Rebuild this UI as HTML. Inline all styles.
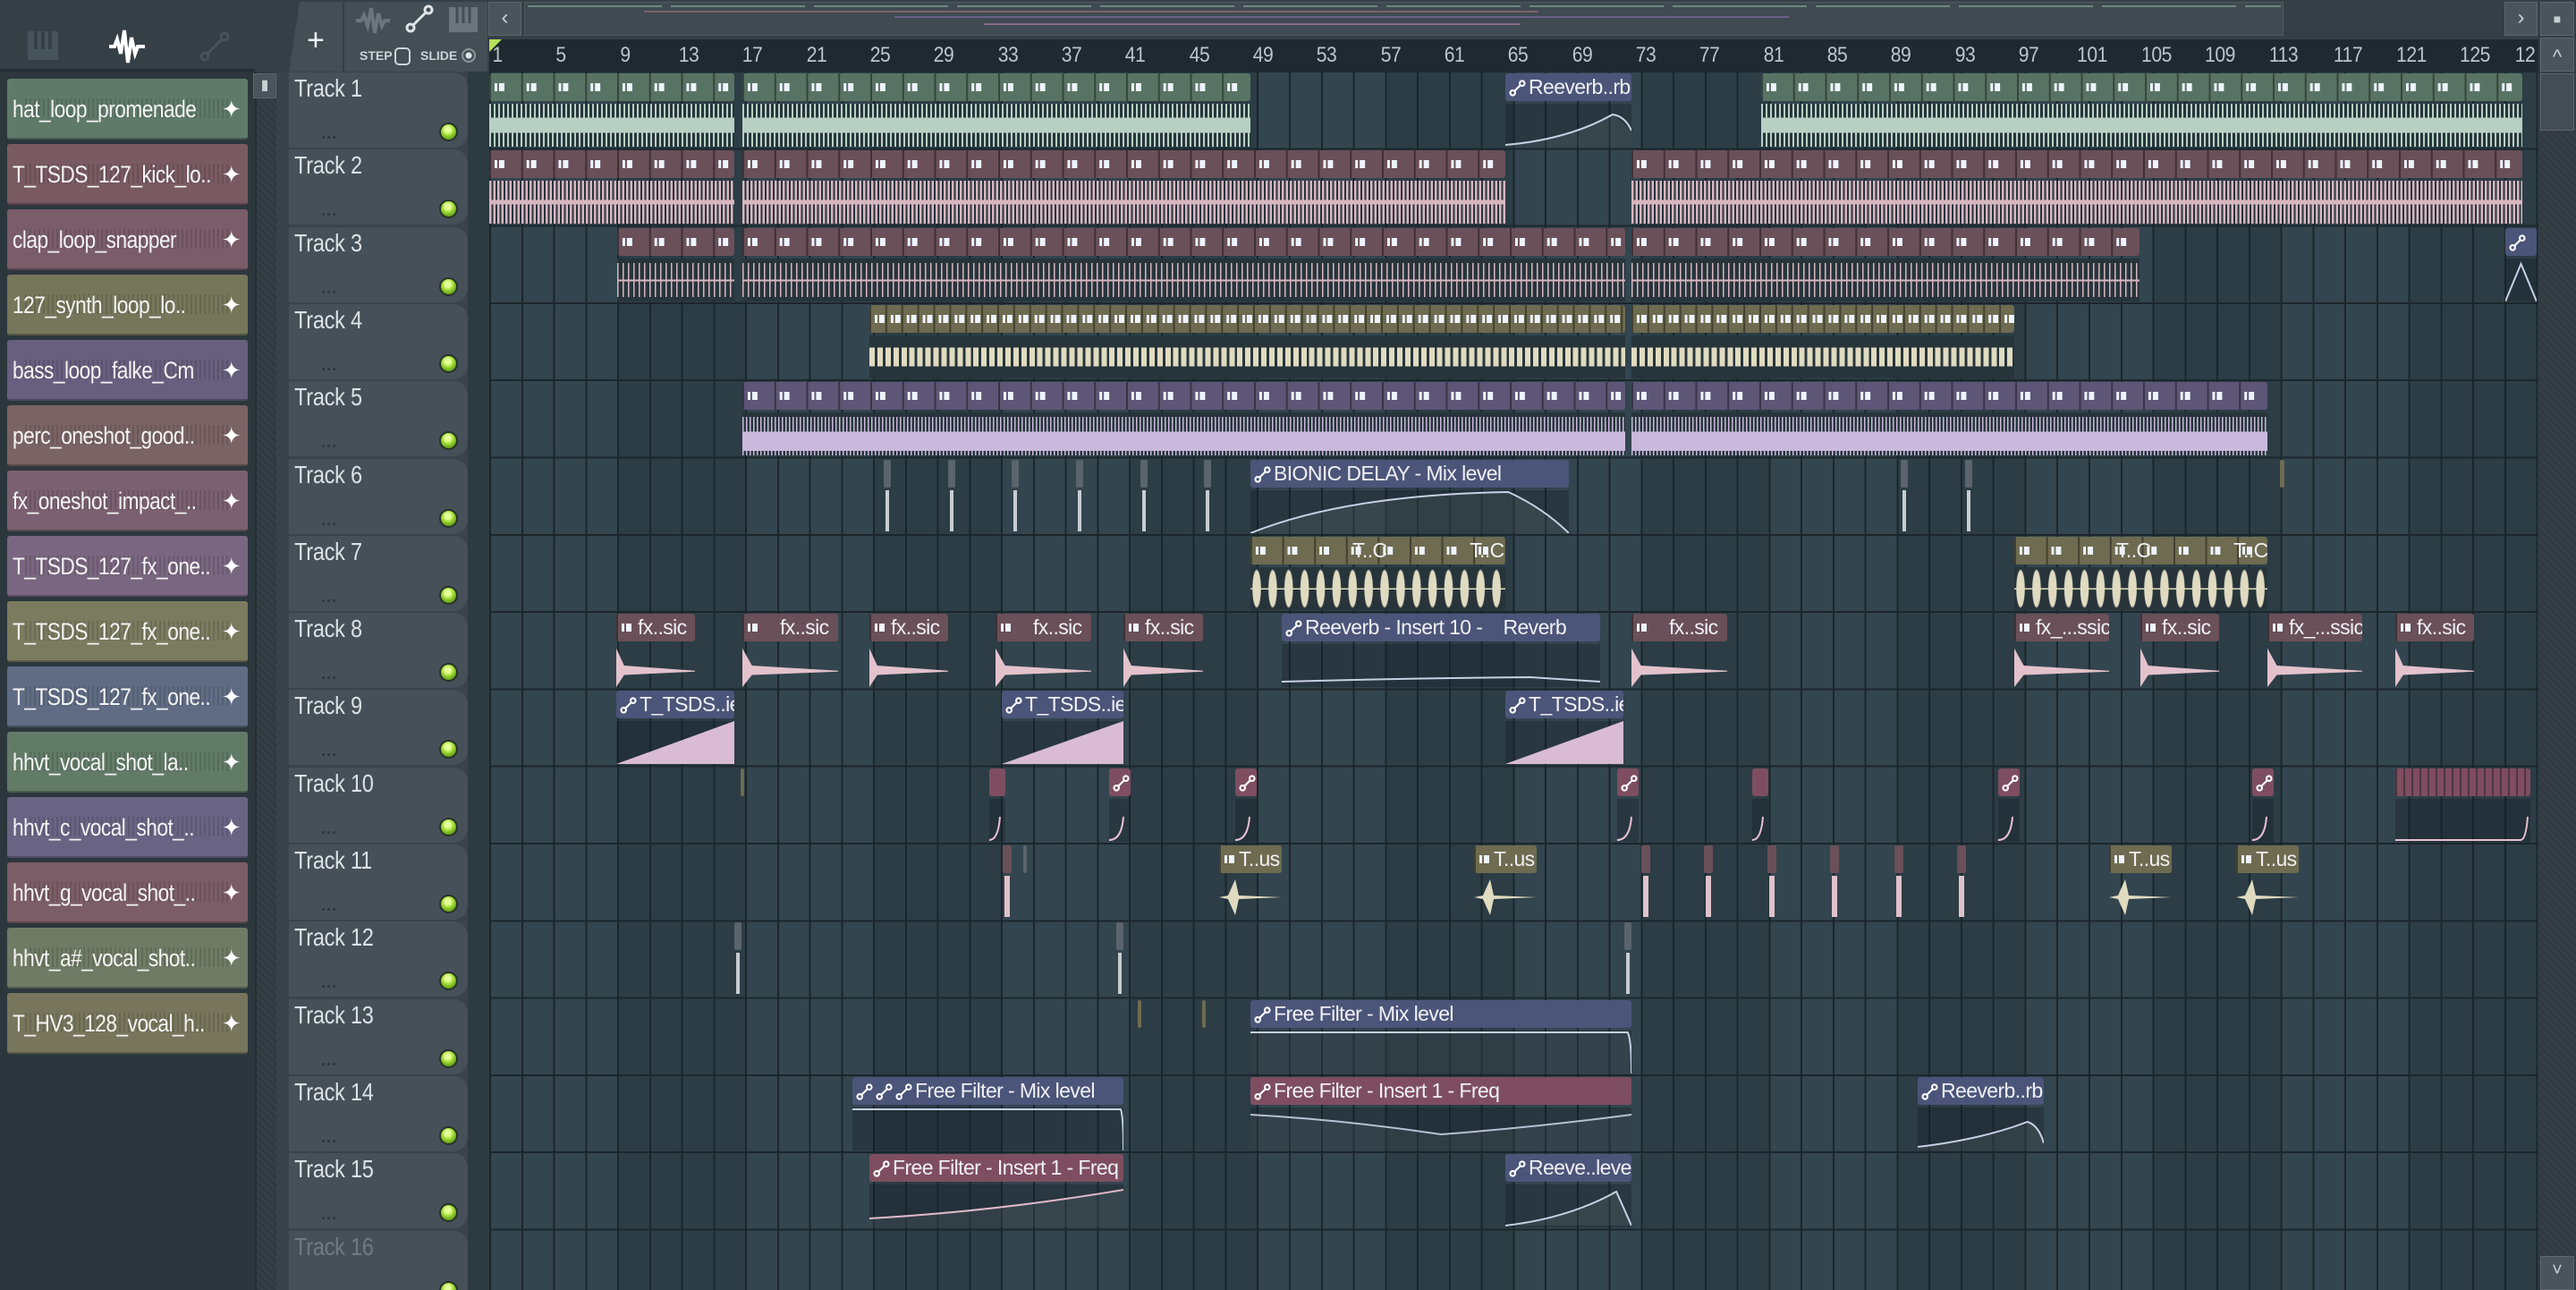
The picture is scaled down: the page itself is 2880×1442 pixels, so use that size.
<!DOCTYPE html>
<html><head><meta charset="utf-8">
<style>
*{box-sizing:border-box;margin:0;padding:0}
html,body{width:2880px;height:1442px;overflow:hidden}
body{background:#353f46;font-family:"Liberation Sans",sans-serif;position:relative}
.a{position:absolute}
#left{left:0;top:0;width:285px;height:1442px;background:#2c373d}
#lefttop{left:0;top:0;width:285px;height:80px;background:#353f46;border-bottom:3px solid #242d32}
#lscroll{left:285px;top:80px;width:24px;height:1362px;background:repeating-linear-gradient(45deg,#2f3a40 0 3px,#353f45 3px 6px);border-left:2px solid #252e33}
.bi{position:absolute;left:8px;width:269px;height:68px;border-radius:3px;color:#f4f4f4;font-size:27px;line-height:68px;padding-left:6px;white-space:nowrap;overflow:hidden;letter-spacing:-0.6px;border-bottom:2px solid rgba(0,0,0,.25)}
.bi::before{content:"";position:absolute;left:20px;right:20px;top:22px;bottom:22px;background:repeating-linear-gradient(90deg,rgba(0,0,0,.12) 0 2px,transparent 2px 5px)}
.bi span{position:relative;display:inline-block;transform:scaleX(.84);transform-origin:0 50%}
.bi i{position:absolute;right:8px;top:0;font-style:normal;font-size:26px;color:#fff}
#hdrcol{left:309px;top:80px;width:238px;height:1362px;background:#38434a}
.th{position:absolute;left:323px;width:200px;height:84px;background:#465058;border-radius:0 16px 16px 0}
.th b{position:absolute;left:6px;top:2px;font-weight:normal;font-size:28px;color:#dbe2e6;letter-spacing:-0.3px;transform:scaleX(.84);transform-origin:0 0;white-space:nowrap}
.th s{position:absolute;left:36px;top:58px;text-decoration:none;font-size:18px;color:#2b3439;letter-spacing:1px;font-weight:bold}
.th u{position:absolute;left:168px;top:56px;width:21px;height:21px;border-radius:50%;background:radial-gradient(circle at 45% 35%,#e6ff9a 0 3px,#a6e03a 6px,#6ea81c 10px);border:2px solid #27322a}
#strip{left:523px;top:80px;width:24px;height:1362px;background:#2c3a41}
#grid{left:547px;top:81px;width:2291px;height:1361px;
background:repeating-linear-gradient(180deg,transparent 0 84.3px,#1b262b 84.3px 86.3px),
repeating-linear-gradient(90deg,#1b262b 0 2px,transparent 2px 35.76px),
repeating-linear-gradient(90deg,#33454f 0 143.04px,#2c3d46 143.04px 286.08px)}
#ruler{left:547px;top:44px;width:2291px;height:37px;background:#1e2a30}
.rn{position:absolute;top:4px;font-size:24px;color:#b9c6cd;transform:translateX(-50%) scaleX(.88);letter-spacing:-0.5px}
#rscroll{left:2838px;top:0;width:42px;height:1442px;background:repeating-linear-gradient(45deg,#303a40 0 3px,#363f45 3px 6px)}
.btn{position:absolute;background:#4a545b;border:1px solid #5c666c;color:#c8d0d4;text-align:center}
.c{position:absolute;height:82px}
.h{position:absolute;left:0;right:0;top:0;height:31px;border-radius:3px;color:#f0f0f4;font-size:23px;line-height:31px;white-space:nowrap;overflow:hidden;padding-left:4px;letter-spacing:-0.6px}
.b{position:absolute;left:0;right:0;top:34px;height:48px;overflow:hidden}
.seg{background:linear-gradient(90deg,transparent 0 6px,#eef4ff 6px 9px,transparent 9px 11px,#eef4ff 11px 17px,transparent 17px) 0 50%/var(--s,35.76px) 9px repeat-x,linear-gradient(90deg,rgba(0,0,0,.4) 0 2px,transparent 2px) 0 0/var(--s,35.76px) 100% repeat-x}
.G .h{background-color:#587364}.P .h{background-color:#6a5058}.O .h{background-color:#6e6b50}.V .h{background-color:#5e5676}
.B .h{background-color:#4b5579}.K .h{background-color:#7e4e60}
.G .b{background:linear-gradient(transparent 32%,#b8d0c3 32% 68%,transparent 68%),repeating-linear-gradient(90deg,#b8d0c3 0 2px,transparent 2px 5px);background-color:#27353b}
.P2 .b{background:linear-gradient(transparent 45%,#d8b6c0 45% 55%,transparent 55%),repeating-linear-gradient(90deg,#d8b6c0 0 2.5px,transparent 2.5px 4.5px);background-color:#27353b}
.P3 .b{background:linear-gradient(transparent 49%,#d8b6c0 49% 53%,transparent 53%),linear-gradient(#27353b 0 10%,transparent 10% 90%,#27353b 90%),repeating-linear-gradient(90deg,#d8b6c0 0 1.5px,transparent 1.5px 6px);background-color:#27353b}
.O4 .b{background:linear-gradient(#27353b 0 28%,transparent 28% 72%,#27353b 72%),repeating-linear-gradient(90deg,#e0dbc0 0 6px,transparent 6px 8.94px);background-color:#27353b}
.V .b{background:linear-gradient(transparent 45%,#cab9dc 45% 90%,transparent 90%),linear-gradient(#27353b 0 10%,transparent 10%),repeating-linear-gradient(90deg,#cab9dc 0 1.5px,transparent 1.5px 4px);background-color:#27353b}
.O7 .b{background:linear-gradient(transparent 49%,#e0dbc0 49% 52%,transparent 52%),radial-gradient(ellipse 5px 22px at 7px 50%,#e0dbc0 0 90%,transparent 100%) 0 0/17.88px 100% repeat-x;background-color:#27353b}
.B .b,.K .b{background:rgba(20,30,36,.35)}
.dk{position:absolute;left:0;right:0;top:0;bottom:0;background:#e3c2cc;clip-path:polygon(0 10%,10% 50%,100% 62%,100% 64%,10% 72%,0 100%)}
.rp{position:absolute;left:0;right:0;top:0;bottom:0;background:#d9bcd3;clip-path:polygon(0 100%,100% 0,100% 100%)}
svg.k{width:19px;height:19px;vertical-align:-3px;margin-right:3px}
svg.cv{position:absolute;left:0;top:0;width:100%;height:100%}
.tn{position:absolute;width:8px;height:82px}
.tn::before{content:"";position:absolute;left:0;right:0;top:0;height:31px;background:#5a646c;border-radius:2px}
.tn::after{content:"";position:absolute;left:2px;right:2px;top:34px;height:46px;background:#c8ccd0}
.tp::before{background:#6a5058}.tp::after{background:#e0c2ca}
.ty::before{background:#6e6b50}.ty::after{background:#dfe0b8;left:3px;right:3px}
</style></head><body>

<div class="a" id="left"></div>
<div class="a" id="lefttop"></div>
<svg class="a" style="left:30px;top:34px" width="36" height="34" viewBox="0 0 36 34"><rect x="1" y="1" width="34" height="32" fill="#46535a"/><path d="M10 1v20M18 1v20M26 1v20" stroke="#353f46" stroke-width="4"/></svg>
<svg class="a" style="left:120px;top:30px" width="44" height="44" viewBox="0 0 44 44"><path d="M2 22h6l3-8 4 16 4-26 4 36 4-28 4 18 3-8h8" stroke="#fff" stroke-width="4" fill="none"/></svg>
<svg class="a" style="left:222px;top:34px" width="36" height="36" viewBox="0 0 36 36" fill="none" stroke="#46535a" stroke-width="3"><circle cx="7" cy="29" r="4"/><circle cx="29" cy="7" r="4"/><path d="M10 26L26 10"/></svg>
<div class="a" id="lscroll"></div>
<div class="btn" style="left:283px;top:82px;width:26px;height:28px;font-size:16px;line-height:26px">▮</div>

<div class="bi" style="top:88px;background:#5f7a69"><span>hat_loop_promenade</span><i>✦</i></div>
<div class="bi" style="top:161px;background:#795a62"><span>T_TSDS_127_kick_lo..</span><i>✦</i></div>
<div class="bi" style="top:234px;background:#7a5d69"><span>clap_loop_snapper</span><i>✦</i></div>
<div class="bi" style="top:307px;background:#76765b"><span>127_synth_loop_lo..</span><i>✦</i></div>
<div class="bi" style="top:380px;background:#675f7e"><span>bass_loop_falke_Cm</span><i>✦</i></div>
<div class="bi" style="top:453px;background:#7a6364"><span>perc_oneshot_good..</span><i>✦</i></div>
<div class="bi" style="top:526px;background:#7a6070"><span>fx_oneshot_impact_..</span><i>✦</i></div>
<div class="bi" style="top:599px;background:#7a6680"><span>T_TSDS_127_fx_one..</span><i>✦</i></div>
<div class="bi" style="top:672px;background:#7b7b60"><span>T_TSDS_127_fx_one..</span><i>✦</i></div>
<div class="bi" style="top:745px;background:#5f6c84"><span>T_TSDS_127_fx_one..</span><i>✦</i></div>
<div class="bi" style="top:818px;background:#627b67"><span>hhvt_vocal_shot_la..</span><i>✦</i></div>
<div class="bi" style="top:891px;background:#6a6484"><span>hhvt_c_vocal_shot_..</span><i>✦</i></div>
<div class="bi" style="top:964px;background:#7b5d67"><span>hhvt_g_vocal_shot_..</span><i>✦</i></div>
<div class="bi" style="top:1037px;background:#6f7b64"><span>hhvt_a#_vocal_shot..</span><i>✦</i></div>
<div class="bi" style="top:1110px;background:#77765c"><span>T_HV3_128_vocal_h..</span><i>✦</i></div>

<div class="a" style="left:309px;top:0;width:2529px;height:44px;background:#353f46"></div>
<div class="a" style="left:323px;top:2px;width:60px;height:78px;background:#434e55;clip-path:polygon(20% 0,100% 0,100% 100%,0 100%)"></div>
<div class="a" style="left:343px;top:28px;font-size:34px;color:#f4f4f4;line-height:34px">+</div>
<div class="a" style="left:385px;top:2px;width:160px;height:78px;background:#434e55"></div>
<svg class="a" style="left:396px;top:6px" width="40" height="34" viewBox="0 0 40 34"><path d="M2 17h6l3-6 4 12 4-20 4 28 4-22 4 14 3-6h6" stroke="#6a767c" stroke-width="4" fill="none"/></svg>
<svg class="a" style="left:452px;top:4px" width="34" height="34" viewBox="0 0 34 34" fill="none" stroke="#dfe5e8" stroke-width="3"><circle cx="7" cy="27" r="4"/><circle cx="27" cy="7" r="4"/><path d="M10 24L24 10"/></svg>
<svg class="a" style="left:502px;top:8px" width="32" height="28" viewBox="0 0 32 28"><rect width="32" height="28" fill="#6a767c"/><path d="M9 0v18M16 0v18M23 0v18" stroke="#434e55" stroke-width="3"/></svg>
<div class="a" style="left:402px;top:54px;font-size:14px;color:#cdd4d8;font-weight:bold">STEP</div>
<div class="a" style="left:441px;top:53px;width:18px;height:20px;border:2px solid #cdd4d8;border-radius:5px"></div>
<div class="a" style="left:470px;top:54px;font-size:14px;color:#cdd4d8;font-weight:bold">SLIDE</div>
<div class="a" style="left:516px;top:54px;width:16px;height:16px;border:2px solid #8a959a;border-radius:50%;background:radial-gradient(circle,#dfe5e8 0 3px,transparent 4px)"></div>
<div class="btn" style="left:546px;top:2px;width:37px;height:38px;font-size:24px;line-height:34px">‹</div>
<div class="a" style="left:586px;top:2px;width:1967px;height:38px;background:#3f4a52;border:1px solid #4d585f"></div>
<div class="a" style="left:590px;top:6px;width:1960px;height:2px;background:repeating-linear-gradient(90deg,#6c8a7c 0 150px,transparent 150px 160px)"></div>
<div class="a" style="left:720px;top:12px;width:1000px;height:2px;background:#80606a"></div>
<div class="a" style="left:1000px;top:18px;width:1000px;height:2px;background:#6a6088"></div>
<div class="a" style="left:1100px;top:26px;width:600px;height:2px;background:#8a6a8a"></div>
<div class="btn" style="left:2800px;top:2px;width:37px;height:38px;font-size:24px;line-height:34px">›</div>

<div class="a" id="rscroll"></div>
<div class="btn" style="left:2840px;top:2px;width:38px;height:38px;font-size:14px;line-height:36px">■</div>
<div class="btn" style="left:2840px;top:42px;width:38px;height:38px;font-size:22px;line-height:42px">^</div>
<div class="btn" style="left:2840px;top:82px;width:38px;height:64px;background:#434d54"></div>
<div class="btn" style="left:2840px;top:1404px;width:38px;height:38px;font-size:20px;line-height:30px">˅</div>

<div class="a" id="hdrcol"></div>
<div class="a" id="strip"></div>
<div class="th" style="top:81px"><b>Track 1</b><s>...</s><u></u></div>
<div class="th" style="top:167px"><b>Track 2</b><s>...</s><u></u></div>
<div class="th" style="top:254px"><b>Track 3</b><s>...</s><u></u></div>
<div class="th" style="top:340px"><b>Track 4</b><s>...</s><u></u></div>
<div class="th" style="top:426px"><b>Track 5</b><s>...</s><u></u></div>
<div class="th" style="top:513px"><b>Track 6</b><s>...</s><u></u></div>
<div class="th" style="top:599px"><b>Track 7</b><s>...</s><u></u></div>
<div class="th" style="top:685px"><b>Track 8</b><s>...</s><u></u></div>
<div class="th" style="top:771px"><b>Track 9</b><s>...</s><u></u></div>
<div class="th" style="top:858px"><b>Track 10</b><s>...</s><u></u></div>
<div class="th" style="top:944px"><b>Track 11</b><s>...</s><u></u></div>
<div class="th" style="top:1030px"><b>Track 12</b><s>...</s><u></u></div>
<div class="th" style="top:1117px"><b>Track 13</b><s>...</s><u></u></div>
<div class="th" style="top:1203px"><b>Track 14</b><s>...</s><u></u></div>
<div class="th" style="top:1289px"><b>Track 15</b><s>...</s><u></u></div>
<div class="th" style="top:1376px"><b style="color:#6f7b82">Track 16</b><u></u></div>

<div class="a" id="ruler">
<div class="a" style="left:0;top:0;width:0;height:0;border-left:14px solid #b5e05a;border-bottom:14px solid transparent"></div>
<span class="rn" style="left:9px">1</span><span class="rn" style="left:80px">5</span><span class="rn" style="left:152px">9</span><span class="rn" style="left:223px">13</span><span class="rn" style="left:294px">17</span><span class="rn" style="left:366px">21</span><span class="rn" style="left:437px">25</span><span class="rn" style="left:508px">29</span><span class="rn" style="left:580px">33</span><span class="rn" style="left:651px">37</span><span class="rn" style="left:722px">41</span><span class="rn" style="left:794px">45</span><span class="rn" style="left:865px">49</span><span class="rn" style="left:936px">53</span><span class="rn" style="left:1008px">57</span><span class="rn" style="left:1079px">61</span><span class="rn" style="left:1150px">65</span><span class="rn" style="left:1222px">69</span><span class="rn" style="left:1293px">73</span><span class="rn" style="left:1364px">77</span><span class="rn" style="left:1436px">81</span><span class="rn" style="left:1507px">85</span><span class="rn" style="left:1578px">89</span><span class="rn" style="left:1650px">93</span><span class="rn" style="left:1721px">97</span><span class="rn" style="left:1792px">101</span><span class="rn" style="left:1864px">105</span><span class="rn" style="left:1935px">109</span><span class="rn" style="left:2006px">113</span><span class="rn" style="left:2078px">117</span><span class="rn" style="left:2149px">121</span><span class="rn" style="left:2220px">125</span><span class="rn" style="left:2276px">12</span>
</div>

<div class="a" id="grid"></div>

<!-- Track 1 -->
<div class="c G" style="left:547px;top:82px;width:274px"><div class="h seg"></div><div class="b"></div></div>
<div class="c G" style="left:830px;top:82px;width:568px"><div class="h seg"></div><div class="b"></div></div>
<div class="c B" style="left:1683px;top:82px;width:141px"><div class="h"><svg class="k" viewBox="0 0 18 18" fill="none" stroke="#fff" stroke-width="2"><circle cx="4" cy="14" r="2.6"/><circle cx="14" cy="4" r="2.6"/><path d="M6 12L12 6"/></svg>Reeverb..rb</div><div class="b"><svg class="cv" viewBox="0 0 100 48" preserveAspectRatio="none"><path d="M0 46Q50 40 85 12L100 30V48H0Z" fill="rgba(255,255,255,.07)"/><path d="M0 46Q50 40 85 12Q95 14 100 30" fill="none" stroke="#c8d0e4" stroke-width="2" vector-effect="non-scaling-stroke"/></svg></div></div>
<div class="c G" style="left:1969px;top:82px;width:851px"><div class="h seg"></div><div class="b"></div></div>

<!-- Track 2 -->
<div class="c P P2" style="left:547px;top:168px;width:274px"><div class="h seg"></div><div class="b"></div></div>
<div class="c P P2" style="left:830px;top:168px;width:853px"><div class="h seg"></div><div class="b"></div></div>
<div class="c P P2" style="left:1824px;top:168px;width:996px"><div class="h seg"></div><div class="b"></div></div>

<!-- Track 3 -->
<div class="c P P3" style="left:690px;top:255px;width:131px"><div class="h seg"></div><div class="b"></div></div>
<div class="c P P3" style="left:830px;top:255px;width:987px"><div class="h seg"></div><div class="b"></div></div>
<div class="c P P3" style="left:1824px;top:255px;width:568px"><div class="h seg"></div><div class="b"></div></div>
<div class="c B" style="left:2801px;top:255px;width:35px"><div class="h"><svg class="k" viewBox="0 0 18 18" fill="none" stroke="#fff" stroke-width="2"><circle cx="4" cy="14" r="2.6"/><circle cx="14" cy="4" r="2.6"/><path d="M6 12L12 6"/></svg></div><div class="b"><svg class="cv" viewBox="0 0 100 48" preserveAspectRatio="none"><path d="M0 48L50 6L100 48" fill="none" stroke="#c8d0e4" stroke-width="2" vector-effect="non-scaling-stroke"/></svg></div></div>

<!-- Track 4 -->
<div class="c O O4" style="left:972px;top:341px;width:845px"><div class="h seg" style="--s:17.88px"></div><div class="b"></div></div>
<div class="c O O4" style="left:1824px;top:341px;width:428px"><div class="h seg" style="--s:17.88px"></div><div class="b"></div></div>

<!-- Track 5 -->
<div class="c V" style="left:830px;top:427px;width:987px"><div class="h seg"></div><div class="b"></div></div>
<div class="c V" style="left:1824px;top:427px;width:711px"><div class="h seg"></div><div class="b"></div></div>

<!-- Track 6 -->
<div class="tn" style="left:988px;top:514px"></div><div class="tn" style="left:1060px;top:514px"></div><div class="tn" style="left:1131px;top:514px"></div><div class="tn" style="left:1203px;top:514px"></div><div class="tn" style="left:1275px;top:514px"></div><div class="tn" style="left:1346px;top:514px"></div>
<div class="c B" style="left:1398px;top:514px;width:356px"><div class="h"><svg class="k" viewBox="0 0 18 18" fill="none" stroke="#fff" stroke-width="2"><circle cx="4" cy="14" r="2.6"/><circle cx="14" cy="4" r="2.6"/><path d="M6 12L12 6"/></svg>BIONIC DELAY - Mix level</div><div class="b"><svg class="cv" viewBox="0 0 100 48" preserveAspectRatio="none"><path d="M0 48Q30 5 81 2Q92 20 100 48Z" fill="rgba(255,255,255,.07)"/><path d="M0 48Q30 5 81 2Q92 20 100 48" fill="none" stroke="#c8d0e4" stroke-width="2" vector-effect="non-scaling-stroke"/></svg></div></div>
<div class="tn" style="left:2125px;top:514px"></div><div class="tn" style="left:2197px;top:514px"></div><div class="tn ty" style="left:2549px;top:514px;width:5px"></div>

<!-- Track 7 -->
<div class="c O O7" style="left:1398px;top:600px;width:285px"><div class="h seg" style="--s:35.6px">&nbsp;&nbsp;&nbsp;&nbsp;&nbsp;&nbsp;&nbsp;&nbsp;&nbsp;&nbsp;&nbsp;&nbsp;&nbsp;&nbsp;&nbsp;&nbsp;&nbsp;&nbsp;&nbsp;T..C&nbsp;&nbsp;&nbsp;&nbsp;&nbsp;&nbsp;&nbsp;&nbsp;&nbsp;&nbsp;&nbsp;&nbsp;&nbsp;&nbsp;&nbsp;&nbsp;T..C</div><div class="b"></div></div>
<div class="c O O7" style="left:2252px;top:600px;width:283px"><div class="h seg" style="--s:35.6px">&nbsp;&nbsp;&nbsp;&nbsp;&nbsp;&nbsp;&nbsp;&nbsp;&nbsp;&nbsp;&nbsp;&nbsp;&nbsp;&nbsp;&nbsp;&nbsp;&nbsp;&nbsp;&nbsp;T..C&nbsp;&nbsp;&nbsp;&nbsp;&nbsp;&nbsp;&nbsp;&nbsp;&nbsp;&nbsp;&nbsp;&nbsp;&nbsp;&nbsp;&nbsp;&nbsp;T..C</div><div class="b"></div></div>

<!-- Track 8 -->
<div class="c P" style="left:689px;top:686px;width:88px"><div class="h seg" style="--s:200px;padding-left:24px">fx..sic</div><div class="b"><div class="dk"></div></div></div>
<div class="c P" style="left:830px;top:686px;width:107px"><div class="h seg" style="--s:19px;background-repeat:no-repeat;padding-left:42px">fx..sic</div><div class="b"><div class="dk"></div></div></div>
<div class="c P" style="left:972px;top:686px;width:88px"><div class="h seg" style="--s:200px;padding-left:24px">fx..sic</div><div class="b"><div class="dk"></div></div></div>
<div class="c P" style="left:1113px;top:686px;width:107px"><div class="h seg" style="--s:19px;background-repeat:no-repeat;padding-left:42px">fx..sic</div><div class="b"><div class="dk"></div></div></div>
<div class="c P" style="left:1256px;top:686px;width:89px"><div class="h seg" style="--s:200px;padding-left:24px">fx..sic</div><div class="b"><div class="dk"></div></div></div>
<div class="c B" style="left:1433px;top:686px;width:356px"><div class="h"><svg class="k" viewBox="0 0 18 18" fill="none" stroke="#fff" stroke-width="2"><circle cx="4" cy="14" r="2.6"/><circle cx="14" cy="4" r="2.6"/><path d="M6 12L12 6"/></svg>Reeverb - Insert 10 -&nbsp;&nbsp;&nbsp; Reverb</div><div class="b"><svg class="cv" viewBox="0 0 100 48" preserveAspectRatio="none"><path d="M0 42Q40 38 78 37L100 42" fill="none" stroke="#c8d0e4" stroke-width="2" vector-effect="non-scaling-stroke"/></svg></div></div>
<div class="c P" style="left:1824px;top:686px;width:107px"><div class="h seg" style="--s:19px;background-repeat:no-repeat;padding-left:42px">fx..sic</div><div class="b"><div class="dk"></div></div></div>
<div class="c P" style="left:2252px;top:686px;width:106px"><div class="h seg" style="--s:200px;padding-left:24px">fx_...ssic</div><div class="b"><div class="dk"></div></div></div>
<div class="c P" style="left:2393px;top:686px;width:88px"><div class="h seg" style="--s:200px;padding-left:24px">fx..sic</div><div class="b"><div class="dk"></div></div></div>
<div class="c P" style="left:2535px;top:686px;width:106px"><div class="h seg" style="--s:200px;padding-left:24px">fx_...ssic</div><div class="b"><div class="dk"></div></div></div>
<div class="c P" style="left:2678px;top:686px;width:88px"><div class="h seg" style="--s:200px;padding-left:24px">fx..sic</div><div class="b"><div class="dk"></div></div></div>

<!-- Track 9 -->
<div class="c B" style="left:689px;top:772px;width:132px"><div class="h"><svg class="k" viewBox="0 0 18 18" fill="none" stroke="#fff" stroke-width="2"><circle cx="4" cy="14" r="2.6"/><circle cx="14" cy="4" r="2.6"/><path d="M6 12L12 6"/></svg>T_TSDS..ier</div><div class="b"><div class="rp"></div></div></div>
<div class="c B" style="left:1120px;top:772px;width:136px"><div class="h"><svg class="k" viewBox="0 0 18 18" fill="none" stroke="#fff" stroke-width="2"><circle cx="4" cy="14" r="2.6"/><circle cx="14" cy="4" r="2.6"/><path d="M6 12L12 6"/></svg>T_TSDS..ier</div><div class="b"><div class="rp"></div></div></div>
<div class="c B" style="left:1683px;top:772px;width:132px"><div class="h"><svg class="k" viewBox="0 0 18 18" fill="none" stroke="#fff" stroke-width="2"><circle cx="4" cy="14" r="2.6"/><circle cx="14" cy="4" r="2.6"/><path d="M6 12L12 6"/></svg>T_TSDS..ier</div><div class="b"><div class="rp"></div></div></div>

<!-- Track 10 -->
<div class="tn ty" style="left:828px;top:859px;width:4px"></div>
<div class="c K" style="left:1106px;top:859px;width:18px"><div class="h"></div><div class="b"><svg class="cv" viewBox="0 0 18 48" preserveAspectRatio="none"><path d="M0 46Q10 46 12 20" fill="none" stroke="#e8c0d0" stroke-width="2"/></svg></div></div>
<div class="c K" style="left:1240px;top:859px;width:24px"><div class="h"><svg class="k" viewBox="0 0 18 18" fill="none" stroke="#fff" stroke-width="2"><circle cx="4" cy="14" r="2.6"/><circle cx="14" cy="4" r="2.6"/><path d="M6 12L12 6"/></svg></div><div class="b"><svg class="cv" viewBox="0 0 24 48" preserveAspectRatio="none"><path d="M0 46Q14 46 16 20" fill="none" stroke="#e8c0d0" stroke-width="2"/></svg></div></div>
<div class="c K" style="left:1381px;top:859px;width:24px"><div class="h"><svg class="k" viewBox="0 0 18 18" fill="none" stroke="#fff" stroke-width="2"><circle cx="4" cy="14" r="2.6"/><circle cx="14" cy="4" r="2.6"/><path d="M6 12L12 6"/></svg></div><div class="b"><svg class="cv" viewBox="0 0 24 48" preserveAspectRatio="none"><path d="M0 46Q14 46 16 20" fill="none" stroke="#e8c0d0" stroke-width="2"/></svg></div></div>
<div class="c K" style="left:1808px;top:859px;width:24px"><div class="h"><svg class="k" viewBox="0 0 18 18" fill="none" stroke="#fff" stroke-width="2"><circle cx="4" cy="14" r="2.6"/><circle cx="14" cy="4" r="2.6"/><path d="M6 12L12 6"/></svg></div><div class="b"><svg class="cv" viewBox="0 0 24 48" preserveAspectRatio="none"><path d="M0 46Q14 46 16 20" fill="none" stroke="#e8c0d0" stroke-width="2"/></svg></div></div>
<div class="c K" style="left:1959px;top:859px;width:18px"><div class="h"></div><div class="b"><svg class="cv" viewBox="0 0 18 48" preserveAspectRatio="none"><path d="M0 46Q10 46 12 20" fill="none" stroke="#e8c0d0" stroke-width="2"/></svg></div></div>
<div class="c K" style="left:2234px;top:859px;width:24px"><div class="h"><svg class="k" viewBox="0 0 18 18" fill="none" stroke="#fff" stroke-width="2"><circle cx="4" cy="14" r="2.6"/><circle cx="14" cy="4" r="2.6"/><path d="M6 12L12 6"/></svg></div><div class="b"><svg class="cv" viewBox="0 0 24 48" preserveAspectRatio="none"><path d="M0 46Q14 46 16 20" fill="none" stroke="#e8c0d0" stroke-width="2"/></svg></div></div>
<div class="c K" style="left:2518px;top:859px;width:24px"><div class="h"><svg class="k" viewBox="0 0 18 18" fill="none" stroke="#fff" stroke-width="2"><circle cx="4" cy="14" r="2.6"/><circle cx="14" cy="4" r="2.6"/><path d="M6 12L12 6"/></svg></div><div class="b"><svg class="cv" viewBox="0 0 24 48" preserveAspectRatio="none"><path d="M0 46Q14 46 16 20" fill="none" stroke="#e8c0d0" stroke-width="2"/></svg></div></div>
<div class="c K" style="left:2678px;top:859px;width:151px"><div class="h" style="background-image:repeating-linear-gradient(90deg,rgba(0,0,0,.35) 0 2px,transparent 2px 9px)"></div><div class="b"><svg class="cv" viewBox="0 0 151 48" preserveAspectRatio="none"><path d="M0 46H140Q146 46 148 20" fill="none" stroke="#e8c0d0" stroke-width="2"/></svg></div></div>

<!-- Track 11 -->
<div class="tn tp" style="left:1121px;top:945px;width:10px"></div><div class="tn" style="left:1144px;top:945px;width:4px"></div>
<div class="c O" style="left:1363px;top:945px;width:70px"><div class="h seg" style="--s:200px;padding-left:22px">T..us</div><div class="b"><svg class="cv" viewBox="0 0 70 48" preserveAspectRatio="none"><path d="M0 24L10 22L18 4L22 22L70 24L22 26L18 44L10 26Z" fill="#e0dbc0"/></svg></div></div>
<div class="c O" style="left:1648px;top:945px;width:70px"><div class="h seg" style="--s:200px;padding-left:22px">T..us</div><div class="b"><svg class="cv" viewBox="0 0 70 48" preserveAspectRatio="none"><path d="M0 24L10 22L18 4L22 22L70 24L22 26L18 44L10 26Z" fill="#e0dbc0"/></svg></div></div>
<div class="tn tp" style="left:1835px;top:945px;width:10px"></div><div class="tn tp" style="left:1905px;top:945px;width:10px"></div><div class="tn tp" style="left:1976px;top:945px;width:10px"></div><div class="tn tp" style="left:2046px;top:945px;width:10px"></div><div class="tn tp" style="left:2118px;top:945px;width:10px"></div><div class="tn tp" style="left:2188px;top:945px;width:10px"></div>
<div class="c O" style="left:2358px;top:945px;width:70px"><div class="h seg" style="--s:200px;padding-left:22px">T..us</div><div class="b"><svg class="cv" viewBox="0 0 70 48" preserveAspectRatio="none"><path d="M0 24L10 22L18 4L22 22L70 24L22 26L18 44L10 26Z" fill="#e0dbc0"/></svg></div></div>
<div class="c O" style="left:2500px;top:945px;width:70px"><div class="h seg" style="--s:200px;padding-left:22px">T..us</div><div class="b"><svg class="cv" viewBox="0 0 70 48" preserveAspectRatio="none"><path d="M0 24L10 22L18 4L22 22L70 24L22 26L18 44L10 26Z" fill="#e0dbc0"/></svg></div></div>

<!-- Track 12 -->
<div class="tn" style="left:821px;top:1031px"></div><div class="tn" style="left:1248px;top:1031px"></div><div class="tn" style="left:1816px;top:1031px"></div>

<!-- Track 13 -->
<div class="tn ty" style="left:1272px;top:1118px;width:4px"></div><div class="tn ty" style="left:1344px;top:1118px;width:4px"></div>
<div class="c B" style="left:1398px;top:1118px;width:426px"><div class="h"><svg class="k" viewBox="0 0 18 18" fill="none" stroke="#fff" stroke-width="2"><circle cx="4" cy="14" r="2.6"/><circle cx="14" cy="4" r="2.6"/><path d="M6 12L12 6"/></svg>Free Filter - Mix level</div><div class="b"><svg class="cv" viewBox="0 0 100 48" preserveAspectRatio="none"><path d="M0 2H99Q100 10 100 48H0Z" fill="rgba(255,255,255,.06)"/><path d="M0 2H99Q100 10 100 48" fill="none" stroke="#c8d0e4" stroke-width="2" vector-effect="non-scaling-stroke"/></svg></div></div>

<!-- Track 14 -->
<div class="c B" style="left:953px;top:1204px;width:303px"><div class="h"><svg class="k" viewBox="0 0 18 18" fill="none" stroke="#fff" stroke-width="2"><circle cx="4" cy="14" r="2.6"/><circle cx="14" cy="4" r="2.6"/><path d="M6 12L12 6"/></svg><svg class="k" viewBox="0 0 18 18" fill="none" stroke="#fff" stroke-width="2"><circle cx="4" cy="14" r="2.6"/><circle cx="14" cy="4" r="2.6"/><path d="M6 12L12 6"/></svg><svg class="k" viewBox="0 0 18 18" fill="none" stroke="#fff" stroke-width="2"><circle cx="4" cy="14" r="2.6"/><circle cx="14" cy="4" r="2.6"/><path d="M6 12L12 6"/></svg>Free Filter - Mix level</div><div class="b"><svg class="cv" viewBox="0 0 100 48" preserveAspectRatio="none"><path d="M0 2H99Q100 10 100 48" fill="none" stroke="#c8d0e4" stroke-width="2" vector-effect="non-scaling-stroke"/></svg></div></div>
<div class="c K" style="left:1398px;top:1204px;width:426px"><div class="h"><svg class="k" viewBox="0 0 18 18" fill="none" stroke="#fff" stroke-width="2"><circle cx="4" cy="14" r="2.6"/><circle cx="14" cy="4" r="2.6"/><path d="M6 12L12 6"/></svg>Free Filter - Insert 1 - Freq</div><div class="b"><svg class="cv" viewBox="0 0 100 48" preserveAspectRatio="none"><path d="M0 8Q25 14 50 30Q75 22 100 8V48H0Z" fill="rgba(255,255,255,.06)"/><path d="M0 8Q25 14 50 30Q75 22 100 8" fill="none" stroke="#b8c0d4" stroke-width="2" vector-effect="non-scaling-stroke"/></svg></div></div>
<div class="c B" style="left:2144px;top:1204px;width:141px"><div class="h"><svg class="k" viewBox="0 0 18 18" fill="none" stroke="#fff" stroke-width="2"><circle cx="4" cy="14" r="2.6"/><circle cx="14" cy="4" r="2.6"/><path d="M6 12L12 6"/></svg>Reeverb..rb</div><div class="b"><svg class="cv" viewBox="0 0 100 48" preserveAspectRatio="none"><path d="M0 44Q50 36 87 16Q96 20 100 40V48H0Z" fill="rgba(255,255,255,.07)"/><path d="M0 44Q50 36 87 16Q96 20 100 40" fill="none" stroke="#c8d0e4" stroke-width="2" vector-effect="non-scaling-stroke"/></svg></div></div>

<!-- Track 15 -->
<div class="c K" style="left:972px;top:1290px;width:284px"><div class="h"><svg class="k" viewBox="0 0 18 18" fill="none" stroke="#fff" stroke-width="2"><circle cx="4" cy="14" r="2.6"/><circle cx="14" cy="4" r="2.6"/><path d="M6 12L12 6"/></svg>Free Filter - Insert 1 - Freq</div><div class="b"><svg class="cv" viewBox="0 0 100 48" preserveAspectRatio="none"><path d="M0 38Q50 30 100 6V48H0Z" fill="rgba(255,255,255,.07)"/><path d="M0 38Q50 30 100 6" fill="none" stroke="#e0b8c8" stroke-width="2" vector-effect="non-scaling-stroke"/></svg></div></div>
<div class="c B" style="left:1683px;top:1290px;width:141px"><div class="h"><svg class="k" viewBox="0 0 18 18" fill="none" stroke="#fff" stroke-width="2"><circle cx="4" cy="14" r="2.6"/><circle cx="14" cy="4" r="2.6"/><path d="M6 12L12 6"/></svg>Reeve..level</div><div class="b"><svg class="cv" viewBox="0 0 100 48" preserveAspectRatio="none"><path d="M0 46Q50 38 88 8L100 46Z" fill="rgba(255,255,255,.07)"/><path d="M0 46Q50 38 88 8L100 46" fill="none" stroke="#c8d0e4" stroke-width="2" vector-effect="non-scaling-stroke"/></svg></div></div>

</body></html>
